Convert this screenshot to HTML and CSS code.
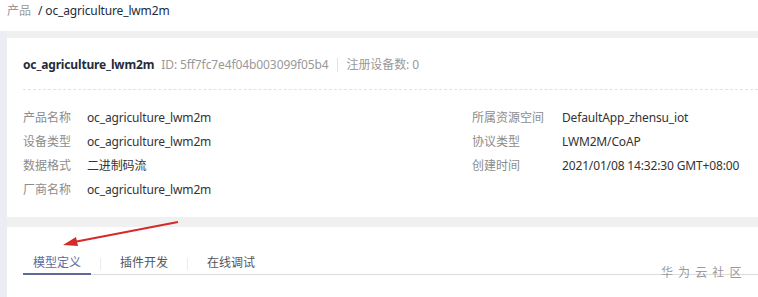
FILE: index.html
```html
<!DOCTYPE html>
<html lang="zh">
<head>
<meta charset="utf-8">
<link rel="stylesheet" href="styles.css">
</head>
<body>
<div class="page">
  <div class="breadcrumb">
    <span class="crumb-root">产品</span>
    <span class="crumb-cur">/ oc_agriculture_lwm2m</span>
  </div>
  <div class="main">
    <section class="card info-card">
      <div class="card-head">
        <span class="title">oc_agriculture_lwm2m</span>
        <span class="meta">ID: 5ff7fc7e4f04b003099f05b4</span>
        <span class="vsep"></span>
        <span class="meta">注册设备数: 0</span>
      </div>
      <div class="info-grid">
        <span class="label">产品名称</span><span class="value">oc_agriculture_lwm2m</span>
        <span class="label">所属资源空间</span><span class="value">DefaultApp_zhensu_iot</span>
        <span class="label">设备类型</span><span class="value">oc_agriculture_lwm2m</span>
        <span class="label">协议类型</span><span class="value">LWM2M/CoAP</span>
        <span class="label">数据格式</span><span class="value">二进制码流</span>
        <span class="label">创建时间</span><span class="value">2021/01/08 14:32:30 GMT+08:00</span>
        <span class="label">厂商名称</span><span class="value">oc_agriculture_lwm2m</span>
      </div>
    </section>
    <section class="card tab-card">
      <div class="tabs">
        <span class="tab active">模型定义</span>
        <span class="tsep"></span>
        <span class="tab">插件开发</span>
        <span class="tsep"></span>
        <span class="tab">在线调试</span>
      </div>
    </section>
  </div>
  <svg class="arrow" width="758" height="297" viewBox="0 0 758 297">
    <line x1="178" y1="222" x2="74" y2="242" stroke="#d42a2a" stroke-width="2"/>
    <polygon points="63,245 76,237 78,246" fill="#d42a2a"/>
  </svg>
  <div class="watermark">华 为 云 社 区</div>
</div>
</body>
</html>
```
FILE: styles.css
```css
html, body {
  margin: 0;
  padding: 0;
  background: #fff;
}
body {
  font-family: "Noto Sans", "Noto Sans CJK SC", sans-serif;
  font-size: 12px;
  color: #333;
}
.page {
  position: relative;
  width: 758px;
  height: 297px;
  overflow: hidden;
}
.breadcrumb {
  height: 31px;
  padding-left: 7px;
  line-height: 22px;
  display: flex;
  gap: 7px;
}
.crumb-root { color: #999; }
.crumb-cur { color: #252b3a; letter-spacing: -0.15px; }
.main {
  background: #f0f0f0;
  border-left: 7px solid #ecedf4;
  padding-top: 7px;
  display: flex;
  flex-direction: column;
  gap: 10px;
  height: 266px;
  box-sizing: border-box;
}
.card {
  background: #fff;
}
.info-card {
  padding: 17px 0 15px 16px;
  height: 179px;
  box-sizing: border-box;
}
.card-head {
  display: flex;
  align-items: center;
  line-height: 20px;
  padding-bottom: 14px;
  border-bottom: 1px dashed #e2e2e2;
}
.title {
  font-weight: bold;
  color: #252b3a;
  margin-right: 7px;
  letter-spacing: -0.15px;
}
.meta { color: #999; letter-spacing: -0.1px; }
.vsep {
  width: 1px;
  height: 14px;
  background: #e2e2e2;
  margin: 0 9px 0 8px;
}
.info-grid {
  padding-top: 16px;
  display: grid;
  grid-template-columns: 64px 385px 90px 1fr;
  line-height: 24px;
}
.label { color: #8c8c8c; }
.value { color: #333; letter-spacing: -0.15px; }
.tab-card {
  flex: 1;
  padding: 26px 0 0 16px;
}
.tabs {
  display: flex;
  align-items: center;
  border-bottom: 1px solid #dcdcdc;
}
.tab {
  padding: 0 10px;
  line-height: 20px;
  border-bottom: 2px solid transparent;
  margin-bottom: -1px;
  color: #555;
}
.tab.active {
  color: #5e6b9a;
  border-bottom-color: #5e6b9a;
}
.tsep {
  width: 1px;
  height: 12px;
  background: #ececec;
  margin: 0 9px;
}
.arrow {
  position: absolute;
  left: 0;
  top: 0;
  pointer-events: none;
}
.watermark {
  position: absolute;
  left: 661px;
  top: 264px;
  color: #9a9a9a;
  font-size: 12px;
  letter-spacing: 1px;
  line-height: 18px;
  white-space: nowrap;
}
```
